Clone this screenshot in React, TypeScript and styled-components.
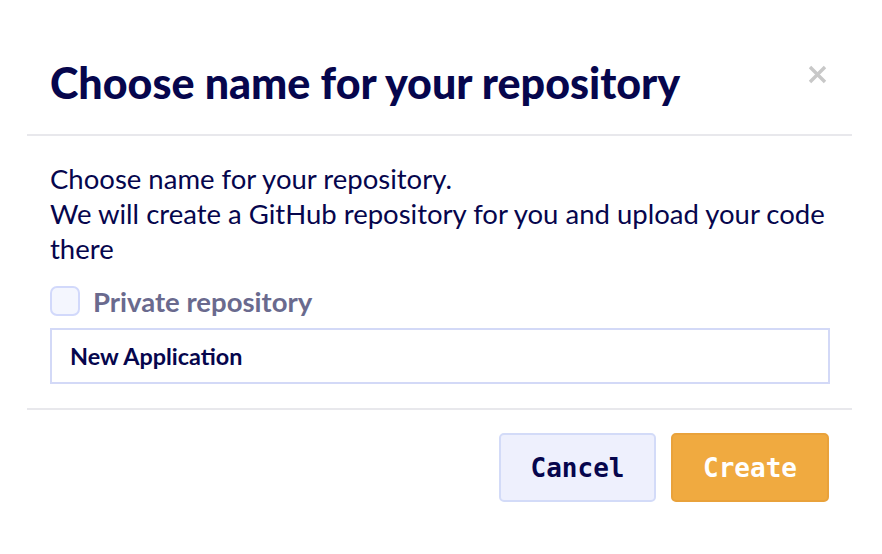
import React from "react";
import styled, { createGlobalStyle } from "styled-components";

const Global = createGlobalStyle`
  html, body { margin: 0; padding: 0; background: #fff; }
  body { font-family: "Lato", "Noto Sans", sans-serif; color: #06064d; }
  * { box-sizing: border-box; }
`;

const Dialog = styled.div`
  margin: 0 30px 0 27px;
  padding-top: 55px;
  display: flex;
  flex-direction: column;
`;

const Header = styled.div`
  display: flex;
  align-items: flex-start;
  justify-content: space-between;
  padding: 0 25px 0 23px;
  height: 79px;
`;

const Title = styled.h1`
  margin: 0;
  font-size: 43px;
  line-height: 56px;
  font-weight: 900;
  color: #06064d;
`;

const Close = styled.button`
  border: none;
  background: none;
  padding: 0;
  margin-top: 10px;
  cursor: pointer;
  display: flex;
`;

const Divider = styled.hr`
  border: none;
  height: 2px;
  background: #e8e8ec;
  margin: 0;
`;

const Body = styled.div`
  padding: 25px 23px 24px 23px;
  display: flex;
  flex-direction: column;
`;

const Text = styled.p`
  margin: 0;
  font-size: 27.5px;
  line-height: 35px;
  color: #06064d;
`;

const CheckRow = styled.label`
  display: flex;
  align-items: center;
  gap: 13px;
  margin-top: 18px;
  height: 34px;
`;

const Box = styled.span`
  width: 30px;
  height: 30px;
  border: 2px solid #d2d9fb;
  border-radius: 7px;
  background: #f4f6fe;
`;

const CheckLabel = styled.span`
  font-size: 27.5px;
  font-weight: 700;
  color: #6a6a8e;
`;

const Input = styled.input`
  margin-top: 10px;
  height: 56px;
  width: 780px;
  border: 2px solid #d3d9f7;
  padding: 0 18px;
  font-family: inherit;
  font-size: 23.4px;
  font-weight: 700;
  color: #06064d;
  outline: none;
`;

const Footer = styled.div`
  display: flex;
  justify-content: flex-end;
  gap: 15px;
  padding: 23px 23px 0 22px;
`;

const Button = styled.button<{ $primary?: boolean }>`
  width: ${(p) => (p.$primary ? 158 : 157)}px;
  height: 69px;
  border-radius: 5px;
  border: 2px solid ${(p) => (p.$primary ? "#e9a23b" : "#d3dbf8")};
  background: ${(p) => (p.$primary ? "#f0aa40" : "#eef0fd")};
  color: ${(p) => (p.$primary ? "#ffffff" : "#06064d")};
  font-family: "DejaVu Sans Mono", "Liberation Mono", monospace;
  font-size: 26px;
  font-weight: 700;
  cursor: pointer;
`;

export default function App() {
  return (
    <>
      <Global />
      <Dialog>
        <Header>
          <Title>Choose name for your repository</Title>
          <Close aria-label="Close">
            <svg width="19" height="19" viewBox="0 0 19 19">
              <path d="M2 2 L17 17 M17 2 L2 17" stroke="#c8c8c8" strokeWidth="3.4" strokeLinecap="butt" />
            </svg>
          </Close>
        </Header>
        <Divider />
        <Body>
          <Text>
            Choose name for your repository.
            <br />
            We will create a GitHub repository for you and upload your code there
          </Text>
          <CheckRow>
            <Box />
            <CheckLabel>Private repository</CheckLabel>
          </CheckRow>
          <Input defaultValue="New Application" />
        </Body>
        <Divider />
        <Footer>
          <Button>Cancel</Button>
          <Button $primary>Create</Button>
        </Footer>
      </Dialog>
    </>
  );
}
